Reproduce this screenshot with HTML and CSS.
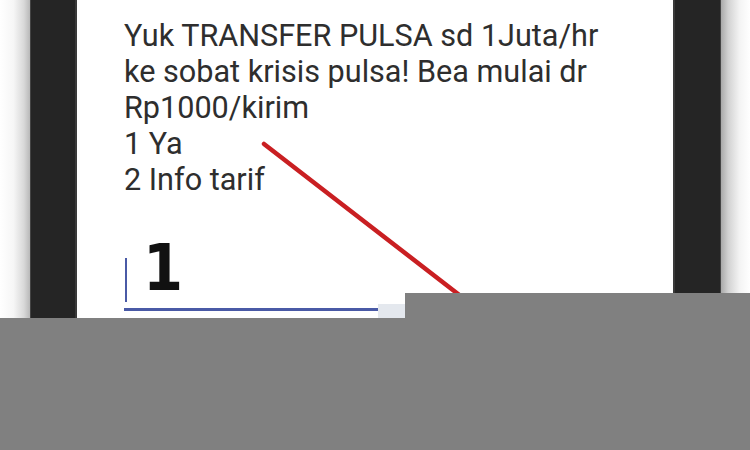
FILE: index.html
```html
<!DOCTYPE html>
<html>
<head>
<meta charset="utf-8">
<link rel="stylesheet" href="styles.css">
</head>
<body>
<div class="page">
  <div class="edge edge-left"></div>
  <div class="bezel bezel-left"></div>
  <div class="screen">
    <div class="message">
      <div>Yuk TRANSFER PULSA sd 1Juta/hr</div>
      <div>ke sobat krisis pulsa! Bea mulai dr</div>
      <div>Rp1000/kirim</div>
      <div>1 Ya</div>
      <div>2 Info tarif</div>
    </div>
    <div class="input">
      <span class="cursor"></span>
      <span class="value">1</span>
    </div>
  </div>
  <div class="bezel bezel-right"></div>
  <div class="edge edge-right"></div>
</div>
<svg class="arrow" width="750" height="450" viewBox="0 0 750 450">
  <line x1="264" y1="144" x2="480" y2="311" stroke="#c91f22" stroke-width="4.5" stroke-linecap="round"/>
</svg>
<div class="mask mask-fade"></div>
<div class="mask mask-low"></div>
<div class="mask mask-high"></div>
</body>
</html>
```
FILE: styles.css
```css
html, body {
  margin: 0;
  padding: 0;
}
body {
  width: 750px;
  height: 450px;
  overflow: hidden;
  position: relative;
  background: #ffffff;
}
.page {
  display: flex;
  height: 450px;
}
.edge {
  flex: none;
}
.edge-left {
  width: 30px;
  background: linear-gradient(to right, #ffffff 0%, #f6f6f6 45%, #d8d8d8 80%, #b8b8b8 100%);
}
.edge-right {
  width: 29px;
  background: linear-gradient(to right, #a9a9a9 0%, #d2d2d2 25%, #f4f4f4 65%, #ffffff 100%);
}
.bezel {
  flex: none;
  background: #252525;
}
.bezel-left {
  width: 47px;
  box-shadow: inset -2px 0 0 #3a3a3a, inset 1px 0 0 #444;
}
.bezel-right {
  width: 48px;
  box-shadow: inset 2px 0 0 #3a3a3a, inset -1px 0 0 #444;
}
.screen {
  flex: none;
  width: 596px;
  background: #ffffff;
  padding: 18px 0 0 47px;
  box-sizing: border-box;
}
.message {
  font-family: Roboto, "Liberation Sans", sans-serif;
  font-size: 30.6px;
  line-height: 36px;
  color: #2e2e2e;
}
.input {
  margin-top: 42px;
  width: 257px;
  height: 71px;
  box-sizing: border-box;
  display: flex;
  align-items: flex-end;
  padding-bottom: 6px;
  border-bottom: 3px solid #4a5aa6;
}
.cursor {
  width: 2px;
  height: 44px;
  background: #4a5aa6;
  margin-left: 1px;
}
.value {
  font-family: "DejaVu Sans Condensed", "DejaVu Sans", sans-serif;
  font-weight: bold;
  font-size: 64px;
  line-height: 68px;
  color: #111111;
  margin-left: 16px;
}
.arrow {
  position: absolute;
  left: 0;
  top: 0;
}
.mask {
  position: absolute;
}
.mask-fade {
  left: 378px;
  top: 304px;
  width: 30px;
  height: 14px;
  background: #e4e8ee;
}
.mask-low {
  left: 0;
  top: 318px;
  width: 750px;
  height: 132px;
  background: #808080;
}
.mask-high {
  left: 405px;
  top: 293px;
  width: 345px;
  height: 25px;
  background: #808080;
}
```
